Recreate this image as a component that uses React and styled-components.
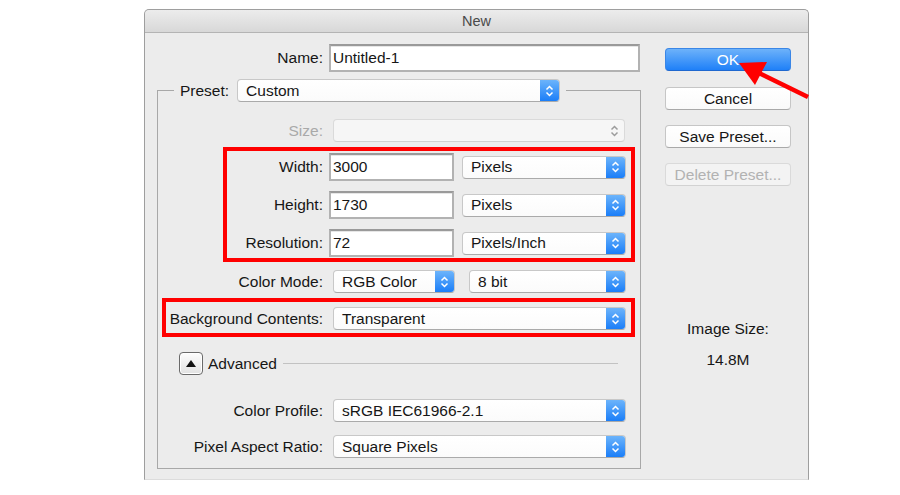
import styled, { createGlobalStyle } from "styled-components";

const GlobalStyle = createGlobalStyle`
body {
  margin: 0;
  background: #ffffff;
  font-family: "Liberation Sans", Arial, sans-serif;
  font-size: 15.5px;
  color: #161616;
}
`

export default function App() {
    return (
        <Page>
            <GlobalStyle />
            <Dialog>
                <TitleBar>New</TitleBar>
                <Body>
                    <LeftPane>
                        <Row $mt={11} $h={28}>
                            <Label $w={166}>Name:</Label>
                            <Field $w={311}>Untitled-1</Field>
                        </Row>
                        <Group>
                            <Legend>
                                <span>Preset:</span>
                                <Popup w={323} ml={8}>Custom</Popup>
                            </Legend>
                            <Row $mt={17}>
                                <Label $disabled>Size:</Label>
                                <Popup w={292} disabled></Popup>
                            </Row>
                            <Highlight $mt={11} $t={-6} $b={-5} $l={65} $r={5}>
                                <Row $h={28}>
                                    <Label>Width:</Label>
                                    <Field $w={125}>3000</Field>
                                    <Popup w={164} ml={8}>Pixels</Popup>
                                </Row>
                                <Row $mt={10} $h={28}>
                                    <Label>Height:</Label>
                                    <Field $w={125}>1730</Field>
                                    <Popup w={164} ml={8}>Pixels</Popup>
                                </Row>
                                <Row $mt={10} $h={28}>
                                    <Label>Resolution:</Label>
                                    <Field $w={125}>72</Field>
                                    <Popup w={164} ml={8}>Pixels/Inch</Popup>
                                </Row>
                            </Highlight>
                            <Row $mt={13}>
                                <Label>Color Mode:</Label>
                                <Popup w={122}>RGB Color</Popup>
                                <Popup w={157} ml={14}>8 bit</Popup>
                            </Row>
                            <Highlight $mt={14} $t={-9} $b={-7} $l={4} $r={5}>
                                <Row>
                                    <Label>Background Contents:</Label>
                                    <Popup w={293}>Transparent</Popup>
                                </Row>
                            </Highlight>
                            <AdvancedRow>
                                <Disclosure>
                                    <svg width="10" height="7" viewBox="0 0 10 7">
                                        <polygon points="5,0 10,7 0,7" fill="#111" />
                                    </svg>
                                </Disclosure>
                                <span>Advanced</span>
                                <Rule />
                            </AdvancedRow>
                            <Row $mt={24}>
                                <Label>Color Profile:</Label>
                                <Popup w={293}>sRGB IEC61966-2.1</Popup>
                            </Row>
                            <Row $mt={13}>
                                <Label>Pixel Aspect Ratio:</Label>
                                <Popup w={293}>Square Pixels</Popup>
                            </Row>
                        </Group>
                    </LeftPane>
                    <RightPane>
                        <Button $primary $mt={15}>OK</Button>
                        <Button $mt={16}>Cancel</Button>
                        <Button $mt={15}>Save Preset...</Button>
                        <Button $mt={15} $disabled>Delete Preset...</Button>
                        <SizeInfo>
                            <div>Image Size:</div>
                            <SizeValue>14.8M</SizeValue>
                        </SizeInfo>
                    </RightPane>
                </Body>
            </Dialog>
            <Arrow width="900" height="495" viewBox="0 0 900 495">
                <line x1="757" y1="72" x2="808" y2="97" stroke="#ff0000" strokeWidth="4.5" />
                <polygon points="739,63 767,62 755,85" fill="#ff0000" />
            </Arrow>
        </Page>
    )
}

function Popup(props) {
    const chevron = props.disabled ? "#9c9c9c" : "#ffffff"
    return (
        <PopupBox $w={props.w} $ml={props.ml} $disabled={props.disabled}>
            <PopupText>{props.children}</PopupText>
            <Stepper $disabled={props.disabled}>
                <svg width="9" height="14" viewBox="0 0 9 14">
                    <polyline points="1.5,5.5 4.5,2.5 7.5,5.5" fill="none" stroke={chevron} strokeWidth="1.5" />
                    <polyline points="1.5,8.5 4.5,11.5 7.5,8.5" fill="none" stroke={chevron} strokeWidth="1.5" />
                </svg>
            </Stepper>
        </PopupBox>
    )
}

const Page = styled.div`
position: relative;
width: 900px;
height: 495px;
overflow: hidden;
padding-top: 9px;
box-sizing: border-box;
`

const Dialog = styled.div`
margin-left: 144px;
width: 665px;
height: 471px;
box-sizing: border-box;
background: #ececec;
border: 1px solid #9e9e9e;
border-bottom-color: #dcdcdc;
border-radius: 5px 5px 0 0;
display: flex;
flex-direction: column;
`

const TitleBar = styled.div`
height: 22px;
flex-shrink: 0;
display: flex;
align-items: center;
justify-content: center;
font-size: 14.5px;
color: #4a4a4a;
background: linear-gradient(#ececec, #d8d8d8);
border-bottom: 1px solid #b4b4b4;
border-radius: 5px 5px 0 0;
`

const Body = styled.div`
display: flex;
`

const LeftPane = styled.div`
padding-left: 12px;
display: flex;
flex-direction: column;
`

const Row = styled.div`
display: flex;
align-items: center;
height: ${p => p.$h || 23}px;
margin-top: ${p => p.$mt || 0}px;
`

const Label = styled.span`
width: ${p => p.$w || 165}px;
flex-shrink: 0;
text-align: right;
white-space: nowrap;
color: ${p => p.$disabled ? "#a9a9a9" : "#161616"};
`

const Field = styled.div`
width: ${p => p.$w}px;
height: 28px;
box-sizing: border-box;
margin-left: 6px;
padding-left: 2px;
display: flex;
align-items: center;
background: #ffffff;
border: 2px solid #b2b2b2;
border-top-color: #9a9a9a;
box-shadow: inset 0 1px 0 #e6e6e6;
`

const PopupBox = styled.div`
width: ${p => p.$w}px;
height: 23px;
box-sizing: border-box;
margin-left: ${p => p.$ml === undefined ? 10 : p.$ml}px;
display: flex;
align-items: center;
border-radius: 4px;
overflow: hidden;
background: ${p => p.$disabled ? "#f6f6f6" : "linear-gradient(#ffffff, #fbfbfb)"};
border: 1px solid ${p => p.$disabled ? "#dadada" : "#c8c8c8"};
border-bottom-color: ${p => p.$disabled ? "#d0d0d0" : "#aaaaaa"};
flex-shrink: 0;
`

const PopupText = styled.span`
flex: 1;
padding-left: 8px;
white-space: nowrap;
overflow: hidden;
`

const Stepper = styled.div`
width: 19px;
height: 100%;
display: flex;
align-items: center;
justify-content: center;
background: ${p => p.$disabled ? "transparent" : "linear-gradient(#6cb4fb, #1b7ef8)"};
`

const Group = styled.div`
margin-top: 18px;
width: 484px;
box-sizing: border-box;
border: 1px solid #a8a8a8;
padding-bottom: 10px;
display: flex;
flex-direction: column;
align-items: flex-start;
`

const Legend = styled.div`
margin-top: -12px;
margin-left: 16px;
padding: 0 6px;
height: 23px;
display: flex;
align-items: center;
background: #ececec;
`

const Highlight = styled.div`
position: relative;
align-self: stretch;
margin-top: ${p => p.$mt}px;
display: flex;
flex-direction: column;

&::after {
  content: "";
  position: absolute;
  top: ${p => p.$t}px;
  bottom: ${p => p.$b}px;
  left: ${p => p.$l}px;
  right: ${p => p.$r}px;
  border: 4px solid #ff0000;
  pointer-events: none;
}
`

const AdvancedRow = styled.div`
align-self: stretch;
display: flex;
align-items: center;
height: 23px;
margin-top: 22px;
padding-left: 21px;
padding-right: 22px;
`

const Disclosure = styled.div`
width: 24px;
height: 23px;
box-sizing: border-box;
margin-right: 5px;
display: flex;
align-items: center;
justify-content: center;
border: 1px solid #6a6a6a;
border-radius: 4px;
background: linear-gradient(#fdfdfd, #e2e2e2);
box-shadow: inset 0 0 0 1px #ffffff;
`

const Rule = styled.div`
flex: 1;
height: 1px;
margin-left: 6px;
background: #c2c2c2;
`

const RightPane = styled.div`
width: 126px;
margin-left: 24px;
display: flex;
flex-direction: column;
flex-shrink: 0;
`

const Button = styled.div`
height: 23px;
box-sizing: border-box;
margin-top: ${p => p.$mt}px;
display: flex;
align-items: center;
justify-content: center;
border-radius: 4px;
color: ${p => p.$primary ? "#ffffff" : p.$disabled ? "#b2b2b2" : "#161616"};
background: ${p => p.$primary ? "linear-gradient(#6db2fa, #1f80f8)" : p.$disabled ? "#f3f3f3" : "linear-gradient(#ffffff, #fafafa)"};
border: 1px solid ${p => p.$primary ? "#3a86e6" : p.$disabled ? "#dadada" : "#c6c6c6"};
border-bottom-color: ${p => p.$primary ? "#1f68cf" : p.$disabled ? "#d2d2d2" : "#a9a9a9"};
`

const SizeInfo = styled.div`
margin-top: 134px;
text-align: center;
line-height: 18px;
`

const SizeValue = styled.div`
margin-top: 13px;
`

const Arrow = styled.svg`
position: absolute;
left: 0;
top: 0;
pointer-events: none;
`
